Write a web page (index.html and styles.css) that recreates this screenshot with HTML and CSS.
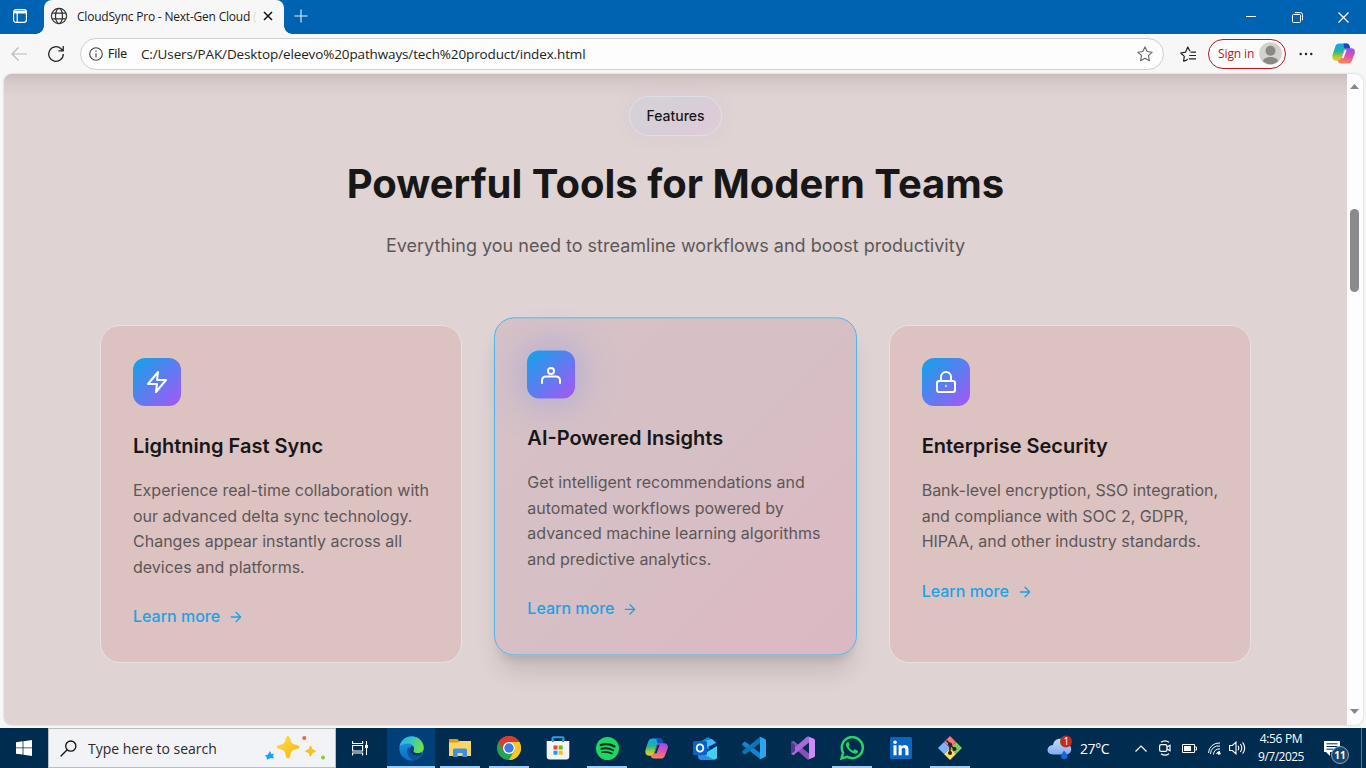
FILE: index.html
```html
<!DOCTYPE html>
<html lang="en">
<head>
<meta charset="utf-8">
<title>CloudSync Pro - Next-Gen Cloud</title>
<link rel="stylesheet" href="styles.css">
</head>
<body>
<svg class="defs" width="0" height="0" aria-hidden="true">
  <defs>
    <linearGradient id="cpA" x1="0" y1="0" x2="0" y2="1"><stop offset="0" stop-color="#18a4f2"/><stop offset=".45" stop-color="#1fb59a"/><stop offset=".75" stop-color="#a5cc33"/><stop offset="1" stop-color="#f5c52c"/></linearGradient>
    <linearGradient id="cpB" x1=".5" y1="0" x2=".3" y2="1"><stop offset="0" stop-color="#9a50e8"/><stop offset=".5" stop-color="#e255a8"/><stop offset="1" stop-color="#ff8a4c"/></linearGradient>
    <linearGradient id="edgeA" x1="0" y1="0" x2="1" y2=".3"><stop offset="0" stop-color="#2fa9e8"/><stop offset=".5" stop-color="#35c6c4"/><stop offset="1" stop-color="#6ee04a"/></linearGradient>
    <linearGradient id="edgeB" x1="0" y1="0" x2="0" y2="1"><stop offset="0" stop-color="#1c9be4"/><stop offset="1" stop-color="#0b6cc4"/></linearGradient>
    <linearGradient id="star" x1="0" y1="0" x2="1" y2="1"><stop offset="0" stop-color="#ffdf4d"/><stop offset="1" stop-color="#f5b50c"/></linearGradient>
    <linearGradient id="cloud" x1="0" y1="0" x2="0" y2="1"><stop offset="0" stop-color="#c6dcfb"/><stop offset="1" stop-color="#7fabf2"/></linearGradient>
    <symbol id="copilot" viewBox="0 0 24 22">
      <path d="M7.500.5h8q2 0 2.600 2l1 3.500h-4.500q-2 0-2.600 2l-2.500 8q-.7 2.500-3.200 2.500H4C.5 18.500-.2 15.500.6 12L3.500 3.500q1-3 4-3z" fill="url(#cpA)"/>
      <path d="M12 .5h3.500q2 0 2.600 2l1 3.500h-4.500q-1.600 0-2.200-2z" fill="#1a48c4"/>
      <path d="M16.500 21.500H9q-2.200 0-2.800-2l-.4-1.500q3 .2 3.800-2.300l2.800-8.200q.8-2 2.900-2H20c3.500 0 4.500 3 3.700 5.500L21 18q-1.200 3.500-4.500 3.500z" fill="url(#cpB)"/>
      <path d="M13.300 7.200h2l-3.200 8.800h-2z" fill="var(--gap)"/>
    </symbol>
  </defs>
</svg>
<div class="desktop">
  <header class="titlebar">
    <button class="tab-actions"><svg width="16" height="16" viewBox="0 0 16 16" fill="none" stroke="#fff" stroke-width="1.200"><rect x="1.600" y="1.600" width="12.800" height="12.800" rx="2.400"/><path d="M1.600 3.500h12.800M1.600 4.700h12.800" stroke-width="1.600"/><path d="M5.200 5v9.500"/></svg></button>
    <div class="tab">
      <svg width="18" height="18" viewBox="0 0 18 18" fill="none" stroke="#333" stroke-width="1.200"><circle cx="9" cy="9" r="7.600"/><ellipse cx="9" cy="9" rx="3.500" ry="7.600"/><path d="M2.200 6.200h13.600M2.200 11.800h13.600"/></svg>
      <span class="tab-title">CloudSync Pro - Next-Gen Cloud <i>(</i></span>
      <svg class="tab-close" width="10" height="10" viewBox="0 0 10 10" stroke="#111" stroke-width="1.500"><path d="M1 1l8 8M9 1L1 9"/></svg>
    </div>
    <svg class="new-tab" width="14" height="14" viewBox="0 0 14 14" stroke="#e5effa" stroke-width="1.100"><path d="M7 .5v13M.5 7h13"/></svg>
    <div class="window-buttons">
      <span><svg width="10" height="10" viewBox="0 0 10 10" stroke="#fff"><path d="M0 4.500h10"/></svg></span>
      <span><svg width="11" height="11" viewBox="0 0 11 11" stroke="#fff" fill="none"><rect x=".5" y="2.500" width="8" height="8" rx="1"/><path d="M2.800.6h5.700q2 0 2 2v5.700"/></svg></span>
      <span><svg width="11" height="11" viewBox="0 0 11 11" stroke="#fff" stroke-width="1.200"><path d="M.5.5l10 10M10.500.5l-10 10"/></svg></span>
    </div>
  </header>

  <nav class="toolbar">
    <svg class="back" width="17" height="14" viewBox="0 0 17 14" fill="none" stroke="#b9b9b9" stroke-width="1.200"><path d="M16 7H1M7.500.5L1 7l6.500 6.500"/></svg>
    <svg class="reload" width="18" height="18" viewBox="0 0 18 18" fill="none" stroke="#222" stroke-width="1.300"><path d="M16.300 9A7.300 7.300 0 1 1 14 3.700l1.800 1.800M16.200 1v4.800h-4.800"/></svg>
    <div class="address">
      <svg width="14" height="14" viewBox="0 0 14 14" fill="none" stroke="#444" stroke-width="1.100"><circle cx="7" cy="7" r="6.300"/><path d="M7 6.200v4.200M7 3.600v1.300"/></svg>
      <span class="scheme">File</span>
      <span class="url">C:/Users/PAK/Desktop/eleevo%20pathways/tech%20product/index.html</span>
      <svg class="fav" width="16" height="16" viewBox="0 0 16 16" fill="none" stroke="#666" stroke-width="1.100" stroke-linejoin="round"><path d="M8 .9l2.200 4.600 5 .7-3.700 3.500.9 5L8 12.300l-4.400 2.400.9-5L.8 6.200l5-.7z"/></svg>
    </div>
    <svg class="favlist" width="17" height="16" viewBox="0 0 17 16" fill="none" stroke="#222" stroke-width="1.200" stroke-linejoin="round"><path d="M5.500 14.700l-1.900.4.7-4.700L.8 7l4.700-.8L7.800 1l2.100 4.300M10.500 6.200H16M9.200 9.500H16M8.800 12.800H16M5.500 14.700l2.200-1.400"/></svg>
    <div class="signin"><span>Sign in</span><svg width="23" height="23" viewBox="0 0 23 23"><circle cx="11.500" cy="11.500" r="11.300" fill="#d3d1ce"/><circle cx="11.500" cy="8.800" r="5" fill="#8b8884"/><path d="M4 19.500c0-6 15-6 15 0q-7.500 5.500-15 0z" fill="#8b8884"/></svg></div>
    <svg class="dots" width="14" height="4" viewBox="0 0 14 4" fill="#222"><circle cx="1.700" cy="2" r="1.200"/><circle cx="7" cy="2" r="1.200"/><circle cx="12.300" cy="2" r="1.200"/></svg>
    <svg class="copilot-btn" width="23" height="21"><use href="#copilot"/></svg>
  </nav>

  <div class="frame">
    <main class="page">
      <div class="section-head">
        <span class="badge">Features</span>
        <h2>Powerful Tools for Modern Teams</h2>
        <p>Everything you need to streamline workflows and boost productivity</p>
      </div>
      <div class="cards">
        <article class="card">
          <div class="card-icon"><svg width="24" height="24" viewBox="0 0 24 24"><path d="M13 2L3 14h9l-1 8 10-12h-9l1-8z"/></svg></div>
          <h3>Lightning Fast Sync</h3>
          <p>Experience real-time collaboration with our advanced delta sync technology. Changes appear instantly across all devices and platforms.</p>
          <a>Learn more<svg width="16" height="16" viewBox="0 0 24 24"><path d="M5 12h14M12 5l7 7-7 7"/></svg></a>
        </article>
        <article class="card active">
          <div class="card-icon"><svg width="24" height="24" viewBox="0 0 24 24"><path d="M3 20.500V18a4 4 0 0 1 4-4h10a4 4 0 0 1 4 4v2.500"/><circle cx="12" cy="8.700" r="3"/></svg></div>
          <h3>AI-Powered Insights</h3>
          <p>Get intelligent recommendations and automated workflows powered by advanced machine learning algorithms and predictive analytics.</p>
          <a>Learn more<svg width="16" height="16" viewBox="0 0 24 24"><path d="M5 12h14M12 5l7 7-7 7"/></svg></a>
        </article>
        <article class="card">
          <div class="card-icon"><svg width="24" height="24" viewBox="0 0 24 24"><rect x="3" y="11" width="18" height="11" rx="2"/><circle cx="12" cy="16" r=".2"/><path d="M7 11V7a5 5 0 0 1 10 0v4"/></svg></div>
          <h3>Enterprise Security</h3>
          <p>Bank-level encryption, SSO integration, and compliance with SOC 2, GDPR, HIPAA, and other industry standards.</p>
          <a>Learn more<svg width="16" height="16" viewBox="0 0 24 24"><path d="M5 12h14M12 5l7 7-7 7"/></svg></a>
        </article>
      </div>
    </main>
    <div class="scrollbar">
      <svg width="9" height="5" viewBox="0 0 9 5" fill="#858585"><path d="M4.500 0L9 5H0z"/></svg>
      <div class="thumb"></div>
      <svg width="9" height="5" viewBox="0 0 9 5" fill="#858585"><path d="M4.500 5L0 0h9z"/></svg>
    </div>
  </div>

  <footer class="taskbar">
    <div class="start"><svg width="16" height="16" viewBox="0 0 16 16" fill="#fff"><path d="M0 2.200l6.600-.9v6.200H0zM7.400 1.200L16 0v7.500H7.400zM0 8.300h6.600v6.300L0 13.700zM7.400 8.300H16V16l-8.600-1.200z"/></svg></div>
    <div class="search">
      <svg width="17" height="17" viewBox="0 0 17 17" fill="none" stroke="#111" stroke-width="1.300"><circle cx="10.800" cy="6.100" r="5.100"/><path d="M7.200 9.800L.7 16.300"/></svg>
      <span>Type here to search</span>
      <svg class="sparkles" width="62" height="26" viewBox="0 0 62 26"><path d="M24 1c2 0 2 3 3.200 6 1 2 3.800 2.600 7 3.500 1.600.5 1.600 2.500 0 3-3.200.9-6 1.500-7 3.500C26 20 26 23.500 24 23.500S22 20 20.800 17c-1-2-3.800-2.600-7-3.500-1.600-.5-1.600-2.500 0-3 3.200-.9 6-1.500 7-3.500C22 4 22 1 24 1z" fill="url(#star)"/><path d="M46.500 10.500q1 0 1.500 3 .4 1.200 3.500 2 1 .6 0 1.200-3.100.8-3.500 2-.5 3-1.500 3t-1.500-3q-.4-1.200-3.500-2-1-.6 0-1.200 3.100-.8 3.500-2 .5-3 1.500-3z" fill="#fbbf24"/><path d="M6 16l1.400 3.200 2.600-.6-1 2 .8 3-3-.5L3 24.800l-.3-2.500L.8 20.500l3-.8z" fill="#13a5f5"/><circle cx="40.300" cy="3" r="2" fill="#f2672e"/><circle cx="59" cy="22.500" r="2" fill="#8cc63f"/></svg>
    </div>
    <div class="apps">
      <div class="app"><svg width="16" height="16" viewBox="0 0 16 16" fill="none" stroke="#fff" stroke-width="1.100"><path d="M.6 1v2.500h10V1M.6 15.500V13h10v2.500M.6 5.500h10v5.500H.6zM14.500 1v14"/><path d="M13 5h3v3h-3z" fill="#fff" stroke="none"/></svg></div>
      <div class="app focus"><svg width="25" height="25" viewBox="0 0 24 24"><circle cx="12" cy="12" r="11.700" fill="url(#edgeB)"/><path d="M.5 10C2.500 1.500 11-1 17 1.500c5 2.300 7.600 7.700 6.500 11.500-.8 2.800-4 4-7 3.500-2.300-.4-3.200-1.400-2.500-2.600 1.300-3.200-.8-6.400-4.500-6.600C6 7 2.500 8.500.5 10z" fill="url(#edgeA)"/><path d="M8.500 11.500C6.500 15.500 9 21.500 14.500 23.400c4-.8 6.500-2.900 8-6-.2-.5-.6-.5-1.200-.2-3.300 1.700-7.500.8-9.800-1.700-1.200-1.400-1.500-3.200-.9-4.800-.8 0-1.600.2-2.100.8z" fill="#12509a"/><path d="M11 11c-1.300 3 .5 7 5 7.800 2.300.4 4.500-.2 5.700-1.700.8-1-.1-1.500-1-1.100-2.500.8-7.400.5-6.700-2.200.7-1.300.4-3.300-.7-4-1-.4-1.900.2-2.300 1.200z" fill="#063e73"/></svg></div>
      <div class="app open"><svg width="22" height="20" viewBox="0 0 22 20"><path d="M0 1.500Q0 1 .6 1h8l1.400 2H22v14H0z" fill="#dd9d14"/><path d="M0 4.500h9L10.500 3H22v15H0z" fill="#fbd566"/><path d="M4 19v-7q0-1.500 1.500-1.500h11Q18 10.500 18 12v7h-4.500v-4h-5v4z" fill="#3e92dc"/></svg></div>
      <div class="app open"><svg width="24" height="24" viewBox="0 0 24 24"><circle cx="12" cy="12" r="12" fill="#23a455"/><path d="M1.600 6A12 12 0 0 1 22.400 6H12a6 6 0 0 0-5.200 9z" fill="#e03a2c"/><path d="M22.400 6A12 12 0 0 1 12 24l5.200-9A6 6 0 0 0 12 6z" fill="#fdc620"/><circle cx="12" cy="12" r="6" fill="#fff"/><circle cx="12" cy="12" r="4.700" fill="#3d79e8"/></svg></div>
      <div class="app"><svg width="24" height="24" viewBox="0 0 24 24"><path d="M6.500 6V2.200q0-1 1-1h9q1 0 1 1V6" fill="none" stroke="#2aa0e4" stroke-width="2"/><path d="M.7 5h22.600v15.500q0 3-3 3H3.700q-3 0-3-3z" fill="#f4f4f4"/><path d="M6 3.500h2V6H6zM16 3.500h2V6h-2z" fill="#2aa0e4"/><path d="M7.500 9.500h4v4h-4z" fill="#e44b23"/><path d="M12.700 9.500h4v4h-4z" fill="#7ab800"/><path d="M7.500 14.700h4v4h-4z" fill="#16a0e6"/><path d="M12.700 14.700h4v4h-4z" fill="#fdb813"/></svg></div>
      <div class="app open"><svg width="23" height="23" viewBox="0 0 24 24" fill="none" stroke="#102c26" stroke-linecap="round"><circle cx="12" cy="12" r="12" fill="#1ed760" stroke="none"/><path d="M5 8.400q7.500-2.400 14.300 1.500" stroke-width="2.300"/><path d="M5.700 12.300q6.500-1.800 12.300 1.500" stroke-width="2"/><path d="M6.200 16q5.500-1.400 10.300 1.300" stroke-width="1.700"/></svg></div>
      <div class="app"><svg width="23" height="21"><use href="#copilot"/></svg></div>
      <div class="app"><svg width="25" height="23" viewBox="0 0 25 23"><path d="M5 6l9-5.500q1-.6 2 0L24 6v14q0 2.500-3 2.500H8q-3 0-3-2.500z" fill="#1682d7"/><path d="M11 5h13v9l-13 6z" fill="#0c51a4"/><path d="M11 4l8-2 4 4-8 6z" fill="#46bdf2"/><path d="M15 10l8-4 1 1v4l-5 3z" fill="#0b2f7c"/><path d="M6 20l18-11v11q0 2.500-3 2.500H8q-2 0-2-2.500z" fill="#41d3ee"/><path d="M6 15l15 7.500H8q-2 0-2-2.500z" fill="#248fe0"/><path d="M0 5.500Q0 4 1.500 4h11Q14 4 14 5.500v11q0 1.500-1.500 1.500h-11Q0 18 0 16.500z" fill="#0763c6"/><ellipse cx="7" cy="11" rx="3.300" ry="3.700" fill="none" stroke="#fff" stroke-width="1.800"/></svg></div>
      <div class="app"><svg width="24" height="24" viewBox="0 0 24 24"><path d="M0 8l2-2q.8-.5 1.700 0L18 17v6L.4 8.900z" fill="#1686cc"/><path d="M0 16l2 2q.8.500 1.700 0L18 7V1L.4 15z" fill="#0877b9"/><path d="M17 .3L23 3q1 .5 1 1.500v15q0 1-1 1.500l-6 2.700q1-.5 1-1.500V2q0-1.200-1-1.700z" fill="#28a8f0"/></svg></div>
      <div class="app"><svg width="24" height="24" viewBox="0 0 24 24"><path d="M0 6l2.500-1.200L18 17.500v5l-2 .8L4 12.500v4L0 18z" fill="#8751b5"/><path d="M0 18l2.500 1.200L18 6.500v-5l-2-.8-16 14z" fill="#a66bd8"/><path d="M0 6l4 3v6l-4 3z" fill="#59358c"/><path d="M16 0l7 2.800q1 .5 1 1.500v15.400q0 1-1 1.500L16 24q2-1 2-3V3q0-2-2-3z" fill="#ca8df7"/></svg></div>
      <div class="app open"><svg width="24" height="24" viewBox="0 0 24 24"><path d="M1.500 22.500l1.600-5.800a10.500 10.500 0 1 1 4.300 4.200z" fill="none" stroke="#27d466" stroke-width="2.400"/><path d="M8.800 6.500c-.5-.9-1.400-.6-2 .1-1.300 1.400-1 3.400.2 5.200 1.900 3 4.300 5.200 7.600 5.800 1.700.3 3.300-.6 3.400-2.200 0-.6-.2-.8-.7-1l-2-1c-.6-.3-.9 0-1.300.6-.6.700-.8.800-1.500.4-1.800-.8-3-2.100-3.800-3.500-.2-.5.2-.8.600-1.300.3-.4.4-.7.200-1.100z" fill="#27d466"/></svg></div>
      <div class="app"><svg width="22" height="22" viewBox="0 0 22 22"><rect width="22" height="22" rx="1.500" fill="#0a66c2"/><path d="M3.500 8.300h3v9.900h-3zM8.600 8.300h3v1.500c1.900-2.800 6.900-2.200 6.900 2.500v5.900h-3.100v-5.300c0-3-3.700-2.800-3.700 0v5.300H8.600z" fill="#fff"/><circle cx="5" cy="5.200" r="1.800" fill="#fff"/></svg></div>
      <div class="app open"><svg width="24" height="24" viewBox="0 0 24 24"><path d="M12 0l6 6-6 6-6-6z" fill="#f97583"/><path d="M18 6l6 6-6 6-6-6z" fill="#84ca5c"/><path d="M6 6l6 6-6 6-6-6z" fill="#7db0ff"/><path d="M12 12l6 6-6 6-6-6z" fill="#ffde68"/><path d="M8.500 4.500L12 8v9M12 9l4.500 4" stroke="#2d2516" stroke-width="1.600" fill="none"/><g fill="#2d2516"><circle cx="12" cy="8.500" r="2.100"/><circle cx="12" cy="17" r="2.100"/><circle cx="16.500" cy="13" r="2.100"/></g></svg></div>
    </div>
    <div class="tray">
      <div class="weather"><svg width="26" height="26" viewBox="0 0 26 26"><path d="M6 19.500c-7.500 0-7-9 0-9.500C7.500 2 18 2 19 9c7 0 7 10.500 0 10.500z" fill="url(#cloud)"/><path d="M17 15.500q3.500 4 3.500 6a3.300 3.300 0 0 1-6.500 0q0-2 3-6z" fill="#1565e0"/><circle cx="19" cy="6.500" r="6" fill="#c42b1c"/><text x="16.500" y="10.200" font-size="10" fill="#fff">1</text></svg><span>27°C</span></div>
      <svg class="chevron" width="12" height="7" viewBox="0 0 12 7" fill="none" stroke="#fff" stroke-width="1.200"><path d="M.5 6.500L6 1l5.500 5.500"/></svg>
      <svg class="meet" width="12" height="16" viewBox="0 0 12 16" fill="none" stroke="#fff" stroke-width="1.200"><rect x=".6" y="4.600" width="7.300" height="6.800" rx="1.500"/><path d="M8 7l3-1.700v5.400L8 9M2 2.200q4-2.800 8 0M2 13.800q4 2.800 8 0"/></svg>
      <svg class="battery" width="15" height="9" viewBox="0 0 15 9"><path d="M.5.500h12v8H.5zM13 3h1.500v3H13" fill="none" stroke="#fff"/><path d="M2 2h7v5H2z" fill="#fff"/></svg>
      <svg class="wifi" width="13" height="13" viewBox="0 0 13 13" fill="none" stroke="#fff"><path d="M.5 11A10.500 10.500 0 0 1 12 1M2.500 12A8 8 0 0 1 12 4M5.500 12.500A5.500 5.500 0 0 1 12 7"/><circle cx="11" cy="11.300" r="1.500" fill="#fff" stroke="none"/><path d="M8.500 12q.5-2.500 3.500-2.500"/></svg>
      <svg class="volume" width="17" height="14" viewBox="0 0 17 14" fill="none" stroke="#fff" stroke-width="1.100"><path d="M.6 4.500h2.800L7 1.200v11.600L3.400 9.500H.6zM9 4.800q1.500 2.200 0 4.400M11.300 3q3 4 0 8M13.600 1.300q4.200 5.700 0 11.400"/></svg>
      <div class="clock"><span>4:56 PM</span><span class="date">9/7/2025</span></div>
      <div class="notify"><svg width="17" height="17" viewBox="0 0 17 17"><path d="M0 1h16v11H6v4l-4-4H0z" fill="#fff"/><path d="M2.500 3.800h11M2.500 6.500h11M2.500 9.200h7" stroke="#002b4e"/></svg><b>11</b></div>
      <i class="peek"></i>
    </div>
  </footer>
</div>
</body>
</html>
```

FILE: styles.css
```css
* { box-sizing: border-box; }
body { margin: 0; overflow: hidden; font-family: "Open Sans", "Noto Sans", sans-serif; }
h2, h3, p { margin: 0; }
svg { display: block; flex: none; }
.defs { position: absolute; }
.desktop { width: 1366px; height: 768px; display: flex; flex-direction: column; background: #f7f7f7; }

.titlebar { height: 34px; flex: none; display: flex; align-items: center; background: #0063b1; color: #1b1b1b; }
.tab-actions { width: 44px; height: 34px; border: 0; padding: 0 0 2px 12px; background: #0063b1; border-radius: 0 0 8px 0; display: flex; align-items: center; }
.tab { width: 240px; height: 34px; background: #f7f7f7; border-radius: 8px 8px 0 0; display: flex; align-items: center; padding: 0 11px 2px 6px; position: relative; }
.tab::before, .tab::after { content: ""; position: absolute; bottom: 0; width: 8px; height: 8px; }
.tab::before { left: -8px; background: radial-gradient(circle at 0 0, #0063b1 7.500px, #f7f7f7 8px); }
.tab::after { right: -8px; background: radial-gradient(circle at 100% 0, #0063b1 7.500px, #f7f7f7 8px); }
.tab-title { margin-left: 9px; font-size: 12px; letter-spacing: -.21px; white-space: nowrap; }
.tab-title i { font-style: normal; color: #ddd; }
.tab-close { margin-left: auto; }
.new-tab { margin: 0 0 3px 10px; }
.window-buttons { margin-left: auto; display: flex; }
.window-buttons span { width: 46px; height: 34px; display: grid; place-items: center; }

.toolbar { height: 39px; flex: none; display: flex; align-items: center; --gap: #f7f7f7; }
.back { margin-left: 11px; }
.reload { margin-left: 19px; }
.address { width: 1084px; height: 32px; margin-left: 15px; border: 1px solid #cfcfcf; border-radius: 16px; background: #fdfdfd; display: flex; align-items: center; padding: 0 10px 0 8px; color: #222; }
.scheme { margin-left: 5px; font-size: 12px; width: 33px; -webkit-text-stroke: .2px; }
.url { font-size: 13.500px; letter-spacing: -.13px; white-space: nowrap; }
.fav { margin-left: auto; }
.favlist { margin-left: 16px; }
.signin { width: 78px; height: 30px; margin-left: 11px; border: 1px solid #b3191e; border-radius: 15px; color: #b3191e; font-size: 12px; letter-spacing: -.1px; display: flex; align-items: center; justify-content: space-between; padding: 0 3px 0 9px; background: #fbfbfb; white-space: nowrap; }
.dots { margin-left: 13px; }
.copilot-btn { margin-left: 19px; }

.frame { flex: none; width: 1359px; height: 651px; margin: 1px 0 0 4px; display: flex; border-radius: 8px; overflow: hidden; background: #fdfdfd; box-shadow: 0 0 2px #bbb; }
.page { width: 1343px; flex: none; background: linear-gradient(#c8bcbc 0, #d4c8c8 7px, #dccfcf 15px, #dfd3d3 24px); font-family: Inter, "Liberation Sans", sans-serif; padding: 22px 96px 0; color: #171717; }
.section-head { display: flex; flex-direction: column; align-items: center; }
.badge { height: 40px; padding: 8px 16px; border: 1px solid #dfe0e5; border-radius: 20px; font-size: 14px; font-weight: 500; line-height: 22px; background: linear-gradient(135deg, #d5d1d7 0%, #d7cfd8 50%, #dccbd8 75%, #dfd0d5 100%); box-shadow: 0 0 20px rgba(168,120,220,.07); }
.section-head h2 { margin-top: 24px; font-size: 40px; line-height: 48px; font-weight: 700; white-space: nowrap; }
.section-head p { margin-top: 23px; font-size: 18px; line-height: 29px; color: #5c5858; white-space: nowrap; }
.cards { margin-top: 65px; display: grid; grid-template-columns: repeat(3, 1fr); gap: 32px; }
.card { border: 1px solid #e7e1e1; border-radius: 20px; background: #ddc2c2; padding: 32px; }
.card.active { transform: translateY(-7.600px); border-color: #4db6ec; background: linear-gradient(135deg, #d6c2c8 0%, #d6bfc5 50%, #dbbac3 80%, #dbb9c2 100%); box-shadow: 0 20px 25px -5px rgba(0,0,0,.12), 0 8px 10px -6px rgba(0,0,0,.12); }
.card-icon { width: 48px; height: 48px; border-radius: 12px; background: linear-gradient(135deg, #0ea5e9, #a855f7); display: grid; place-items: center; }
.active .card-icon { box-shadow: 0 0 40px rgba(59,110,246,.36); }
.card svg { fill: none; stroke: #fff; stroke-width: 2; stroke-linecap: round; stroke-linejoin: round; }
.card h3 { margin-top: 24px; font-size: 20px; line-height: 32px; font-weight: 600; white-space: nowrap; }
.card p { margin: 16px -3px 0 0; font-size: 16px; line-height: 25.600px; color: #5c5757; }
.card a { margin-top: 24px; display: flex; align-items: center; gap: 8px; font-size: 16px; line-height: 25.600px; font-weight: 500; color: #1aa2e6; }
.card a svg { stroke: #1aa2e6; }
.scrollbar { flex: 1; display: flex; flex-direction: column; align-items: center; justify-content: space-between; padding: 10px 1px 11px 0; position: relative; }
.thumb { position: absolute; top: 135px; left: 3px; width: 9px; height: 83px; border-radius: 5px; background: #8b8b8b; }

.taskbar { height: 40px; margin-top: auto; flex: none; display: flex; background: #002c4f; color: #fff; }
.start { width: 48px; display: grid; place-items: center; }
.search { width: 288px; border: 1px solid #bcbcbc; background: #f2f3f6; color: #2b2b2b; display: flex; align-items: center; padding: 0 9px 0 11px; font-size: 14px; white-space: nowrap; }
.search span { margin-left: 11px; }
.sparkles { margin-left: auto; }
.apps { display: flex; gap: 1px; --gap: #002c4f; }
.app { width: 48px; height: 40px; display: grid; place-items: center; }
.app:first-child { margin-right: 2px; }
.app.focus { background: #004078; border-bottom: 2px solid #9bcaf2; padding-top: 2px; }
.app.open { background: linear-gradient(#9bcaf2, #9bcaf2) 50% 100% / 40px 2px no-repeat; }
.tray { margin-left: auto; width: 319px; display: flex; align-items: center; }
.weather { display: flex; align-items: center; width: 88px; font-size: 14px; white-space: nowrap; }
.weather span { margin-left: 7px; letter-spacing: -.4px; }
.meet { margin-left: 12px; }
.battery { margin-left: 11px; }
.wifi { margin-left: 11px; }
.volume { margin-left: 8px; }
.clock { width: 60px; margin-left: 5px; height: 40px; padding-top: 2px; text-align: center; font-size: 12px; line-height: 18px; letter-spacing: -.35px; display: flex; flex-direction: column; white-space: nowrap; }
.date { letter-spacing: -.5px; }
.notify { position: relative; margin-left: 13px; width: 26px; height: 17px; }
.notify b { position: absolute; left: 7px; top: 6px; width: 18px; height: 18px; border: 1px solid #8ba6bb; border-radius: 50%; background: #17466c; font-size: 10px; line-height: 16px; text-align: center; }
.peek { margin-left: auto; margin-right: 4px; width: 1px; height: 40px; background: #56748e; }
```
